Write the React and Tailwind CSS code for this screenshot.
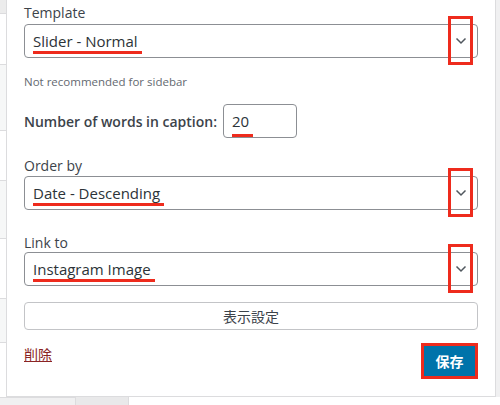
const font = { fontFamily: '"Open Sans", "Noto Sans CJK JP", sans-serif' };

function Chevron() {
  return (
    <svg width="12" height="8" viewBox="0 0 12 8" className="text-[#50575e]">
      <path d="M1.5 1.5 L6 6 L10.5 1.5" fill="none" stroke="currentColor" strokeWidth="1.5" />
    </svg>
  );
}

function Marked({ children }) {
  return (
    <span className="relative inline-block">
      {children}
      <span className="absolute left-0 right-[-4px] bottom-[-5px] h-[3px] bg-[#ee2b1d]" />
    </span>
  );
}

function Select({ value }) {
  return (
    <div className="relative h-[34px] rounded-[4px] border border-[#8c8f94] bg-white flex items-center pl-[8px] pr-[10px]">
      <span className="flex-1 text-[15px] text-[#2c3338] leading-none">
        <Marked>{value}</Marked>
      </span>
      <Chevron />
      {/* annotation box */}
      <span className="absolute left-[423px] top-[-9px] w-[25px] h-[49px] border-[3px] border-[#ee2b1d]" />
    </div>
  );
}

function Label({ children }) {
  return <div className="text-[14px] leading-[20px] text-[#3c434a]">{children}</div>;
}

export default function App() {
  return (
    <div className="w-[500px] h-[405px] bg-[#f0f0f1] overflow-hidden flex flex-col" style={font}>
      <div className="flex h-[397px]">
        {/* sliver of page behind the panel */}
        <div className="w-[6px] flex flex-col bg-white">
          <div className="h-[14px] bg-[#ececec] border-b border-[#dcdcde]" />
          <div className="h-[51px] border-b border-[#dcdcde]" />
          <div className="h-[66px] bg-[#f6f7f7] border-b border-[#dcdcde]" />
          <div className="h-[50px] border-b border-[#dcdcde]" />
          <div className="h-[58px] bg-[#f6f7f7] border-b border-[#dcdcde]" />
          <div className="h-[60px] border-b border-[#dcdcde]" />
          <div className="h-[44px] bg-[#f6f7f7] border-b border-[#dcdcde]" />
          <div className="flex-1 bg-white" />
        </div>

        {/* widget panel */}
        <div className="w-[490px] bg-white border-l border-r border-b border-[#dcdcde] pl-[17px] pr-[17px] pt-[3px]">
          <Label>Template</Label>
          <div className="mt-[1px]">
            <Select value="Slider - Normal" />
          </div>
          <div className="mt-[16px] text-[11.5px] leading-[16px] text-[#646970]">
            Not recommended for sidebar
          </div>

          <div className="mt-[14px] flex items-center gap-[6px]">
            <span className="text-[14px] font-semibold text-[#3c434a]">Number of words in caption:</span>
            <div className="w-[74px] h-[34px] rounded-[4px] border border-[#8c8f94] flex items-center pl-[8px] text-[15px] text-[#2c3338]">
              <Marked>20</Marked>
            </div>
          </div>

          <div className="mt-[18px]">
            <Label>Order by</Label>
          </div>
          <div className="mt-[0px]">
            <Select value="Date - Descending" />
          </div>

          <div className="mt-[23px]">
            <Label>Link to</Label>
          </div>
          <div className="mt-[-1px]">
            <Select value="Instagram Image" />
          </div>

          <button className="mt-[16px] w-full h-[28px] rounded-[4px] border border-[#c3c4c7] bg-white text-[14px] text-[#3c434a]">
            表示設定
          </button>

          <div className="mt-[13px] flex items-start justify-between">
            <a href="#" className="mt-[2px] text-[14px] leading-[20px] text-[#8a2424] underline">
              削除
            </a>
            <div className="border-[3px] border-[#ee2b1d]">
              <button className="w-[51px] h-[30px] bg-[#0073aa] text-white text-[14px] font-bold">
                保存
              </button>
            </div>
          </div>
        </div>
      </div>

      {/* page below the panel */}
      <div className="flex-1 flex">
        <div className="w-[75px] border-t border-[#dcdcde]" />
        <div className="w-[54px] bg-[#e9e9ea] border-l border-r border-[#dcdcde]" />
        <div className="flex-1 bg-white" />
      </div>
    </div>
  );
}
